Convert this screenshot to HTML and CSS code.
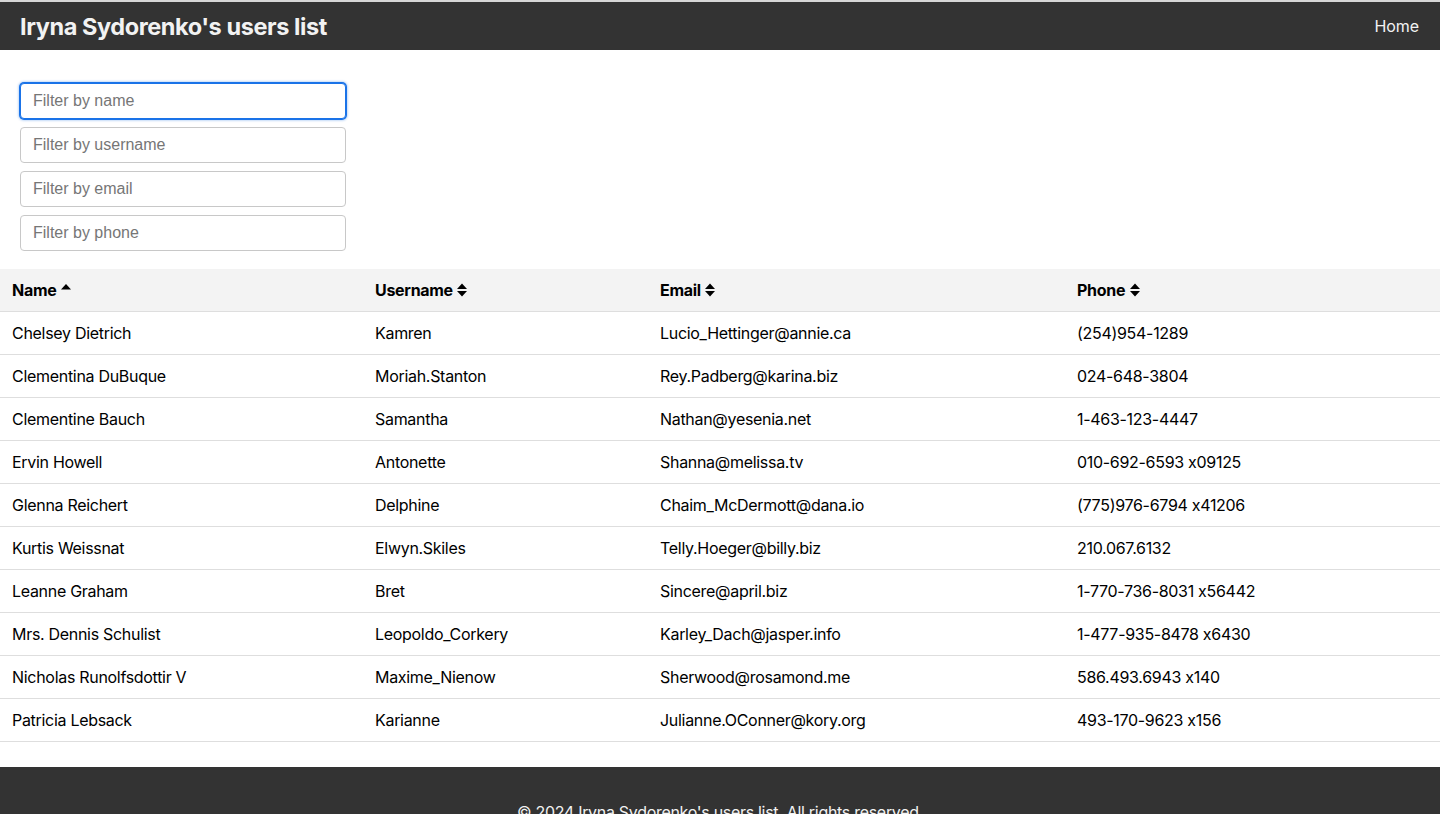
FILE: index.html
```html
<!DOCTYPE html>
<html lang="en">
<head>
<meta charset="utf-8">
<title>Iryna Sydorenko's users list</title>
<link rel="stylesheet" href="styles.css">
</head>
<body>
<div class="topline"></div>
<header class="navbar">
  <h1 class="brand">Iryna Sydorenko's users list</h1>
  <a class="nav-link" href="#">Home</a>
</header>
<main>
  <section class="filters">
    <input class="filter focused" type="text" placeholder="Filter by name">
    <input class="filter" type="text" placeholder="Filter by username">
    <input class="filter" type="text" placeholder="Filter by email">
    <input class="filter" type="text" placeholder="Filter by phone">
  </section>
  <table class="users">
    <colgroup>
      <col class="c-name"><col class="c-user"><col class="c-email"><col class="c-phone">
    </colgroup>
    <thead>
      <tr>
        <th>Name <svg class="sort" viewBox="0 0 10 16"><path d="M0 7.5h10L5 2z"/></svg></th>
        <th>Username <svg class="sort" viewBox="0 0 10 16"><path d="M0 7h10L5 1.6zM0 9h10l-5 5.4z"/></svg></th>
        <th>Email <svg class="sort" viewBox="0 0 10 16"><path d="M0 7h10L5 1.6zM0 9h10l-5 5.4z"/></svg></th>
        <th>Phone <svg class="sort" viewBox="0 0 10 16"><path d="M0 7h10L5 1.6zM0 9h10l-5 5.4z"/></svg></th>
      </tr>
    </thead>
    <tbody>
      <tr><td>Chelsey Dietrich</td><td>Kamren</td><td>Lucio_Hettinger@annie.ca</td><td>(254)954-1289</td></tr>
      <tr><td>Clementina DuBuque</td><td>Moriah.Stanton</td><td>Rey.Padberg@karina.biz</td><td>024-648-3804</td></tr>
      <tr><td>Clementine Bauch</td><td>Samantha</td><td>Nathan@yesenia.net</td><td>1-463-123-4447</td></tr>
      <tr><td>Ervin Howell</td><td>Antonette</td><td>Shanna@melissa.tv</td><td>010-692-6593 x09125</td></tr>
      <tr><td>Glenna Reichert</td><td>Delphine</td><td>Chaim_McDermott@dana.io</td><td>(775)976-6794 x41206</td></tr>
      <tr><td>Kurtis Weissnat</td><td>Elwyn.Skiles</td><td>Telly.Hoeger@billy.biz</td><td>210.067.6132</td></tr>
      <tr><td>Leanne Graham</td><td>Bret</td><td>Sincere@april.biz</td><td>1-770-736-8031 x56442</td></tr>
      <tr><td>Mrs. Dennis Schulist</td><td>Leopoldo_Corkery</td><td>Karley_Dach@jasper.info</td><td>1-477-935-8478 x6430</td></tr>
      <tr><td>Nicholas Runolfsdottir V</td><td>Maxime_Nienow</td><td>Sherwood@rosamond.me</td><td>586.493.6943 x140</td></tr>
      <tr><td>Patricia Lebsack</td><td>Karianne</td><td>Julianne.OConner@kory.org</td><td>493-170-9623 x156</td></tr>
    </tbody>
  </table>
</main>
<footer class="footer">
  <p>© 2024 Iryna Sydorenko's users list. All rights reserved.</p>
</footer>
</body>
</html>
```
FILE: styles.css
```css
* { box-sizing: border-box; }
html, body { margin: 0; padding: 0; }
body {
  font-family: Inter, "Noto Sans", sans-serif;
  font-feature-settings: "calt" 0;
  letter-spacing: -0.3px;
  color: #000;
  background: #fff;
}
.topline { height: 2px; background: #d6d6d6; }
.navbar {
  height: 48px;
  background: #333;
  display: flex;
  align-items: center;
  justify-content: space-between;
  padding: 0 21px 0 20px;
}
.brand {
  margin: 0;
  font-size: 23.5px;
  font-weight: 700;
  color: #f2f2f2;
  letter-spacing: -0.42px;
}
.nav-link {
  color: #f2f2f2;
  text-decoration: none;
  font-size: 16px;
  letter-spacing: -0.1px;
}
.filters {
  display: flex;
  flex-direction: column;
  align-items: flex-start;
  gap: 8px;
  padding: 33px 20px 18px;
}
.filter {
  width: 326px;
  height: 36px;
  margin: 0;
  padding: 0 12px;
  border: 1px solid #c8c8c8;
  border-radius: 4px;
  font-family: "Liberation Sans", Arial, sans-serif;
  font-size: 16px;
  letter-spacing: 0;
  color: #333;
  background: #fff;
  outline: none;
}
.filter::placeholder { color: #767676; }
.filter.focused {
  border-color: #1a73e8;
  box-shadow: 0 0 0 1px #1a73e8, 0 0 2px 2px rgba(26,115,232,0.25);
}
.users {
  width: 100%;
  border-collapse: collapse;
  table-layout: fixed;
  font-size: 16px;
}
.c-name { width: 363px; }
.c-user { width: 285px; }
.c-email { width: 417px; }
.c-phone { width: 375px; }
.users th, .users td {
  text-align: left;
  padding: 0 12px;
  border-bottom: 1px solid #dedede;
  white-space: nowrap;
}
.users th { height: 42px; font-weight: 700; }
.users td { height: 43px; }
.users thead tr { background: #f3f3f3; }
.sort {
  width: 10px;
  height: 16px;
  vertical-align: -2px;
  margin-left: 1px;
  fill: #000;
}
.footer {
  margin-top: 25px;
  background: #333;
  color: #f2f2f2;
  text-align: center;
  padding: 35px 20px 40px;
}
.footer p { margin: 0; font-size: 16px; }
```
